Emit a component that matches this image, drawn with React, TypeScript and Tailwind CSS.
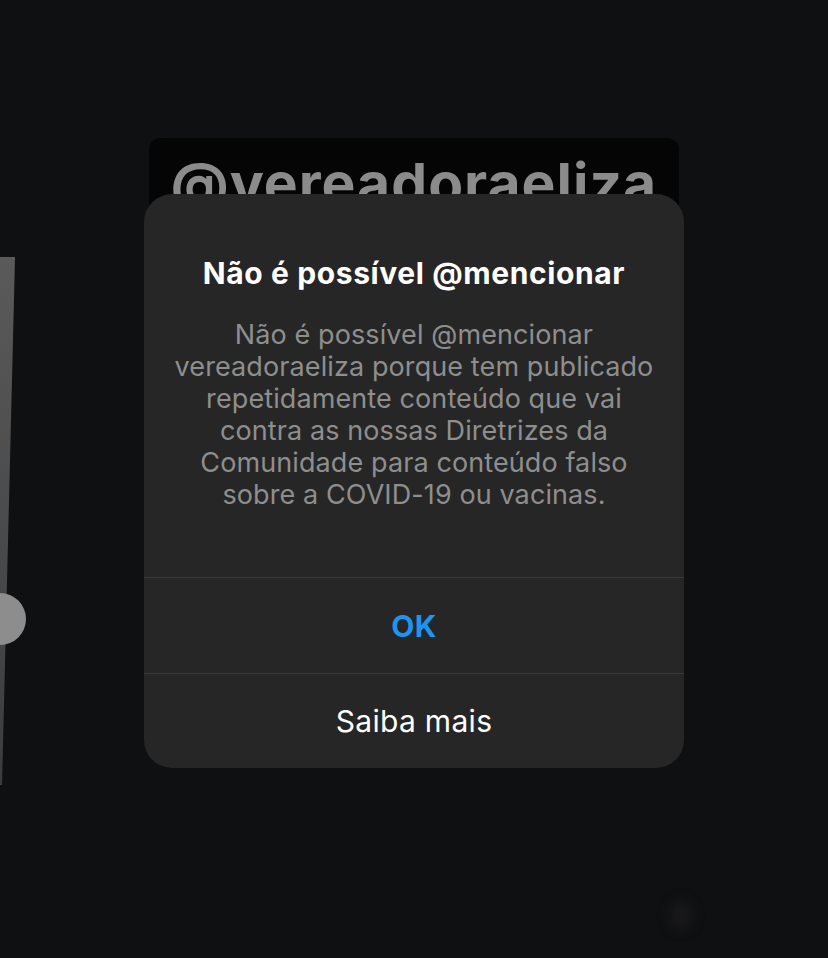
import React from "react";

export default function App() {
  return (
    <div
      className="relative w-[828px] h-[958px] overflow-hidden bg-[#0f1012]"
      style={{ fontFamily: "Inter, 'Noto Sans', 'Liberation Sans', sans-serif" }}
    >
      {/* left slider */}
      <svg className="absolute left-0 top-[250px]" width="40" height="545" viewBox="0 0 40 545">
        <defs>
          <linearGradient id="bar" x1="0" y1="0" x2="0" y2="1">
            <stop offset="0" stopColor="#5a5a5b" />
            <stop offset="1" stopColor="#3c3c3d" />
          </linearGradient>
        </defs>
        <polygon points="0,7 15,7 2,535 0,535" fill="url(#bar)" />
        <circle cx="0" cy="369" r="26" fill="#8d8d8d" />
      </svg>

      {/* faint blob */}
      <div className="absolute left-[670px] top-[902px] w-[22px] h-[26px] rounded-full bg-[#19191b] blur-[6px]" />

      {/* text card behind */}
      <div className="absolute left-[149px] top-[138px] w-[530px] h-[110px] rounded-[12px] bg-[#050505] overflow-hidden flex justify-center">
        <div className="pt-[10px] text-[57px] font-bold leading-[72px] tracking-[1px] text-[#8b8b8b]">
          @vereadoraeliza
        </div>
      </div>

      {/* dialog */}
      <div className="absolute left-[144px] top-[194px] w-[540px] h-[574px] rounded-[28px] bg-[#262626] flex flex-col">
        <div className="flex-1 flex flex-col items-center pt-[57px] px-[16px]">
          <div className="text-[30px] font-bold leading-[44px] text-white tracking-[0.6px] whitespace-nowrap">
            Não é possível @mencionar
          </div>
          <div className="mt-[24px] text-center text-[27px] leading-[32px] text-[#8e8e8e] tracking-[0.1px] whitespace-nowrap">
            Não é possível @mencionar
            <br />
            vereadoraeliza porque tem publicado
            <br />
            repetidamente conteúdo que vai
            <br />
            contra as nossas Diretrizes da
            <br />
            Comunidade para conteúdo falso
            <br />
            sobre a COVID-19 ou vacinas.
          </div>
        </div>
        <div className="h-[96px] border-t border-[#3a3a3a] flex items-center justify-center text-[30px] font-bold text-[#1c95f0] tracking-[0.5px] pt-[2px]">
          OK
        </div>
        <div className="h-[95px] border-t border-[#3a3a3a] flex items-center justify-center text-[30px] text-white tracking-[0.3px]">
          Saiba mais
        </div>
      </div>
    </div>
  );
}
